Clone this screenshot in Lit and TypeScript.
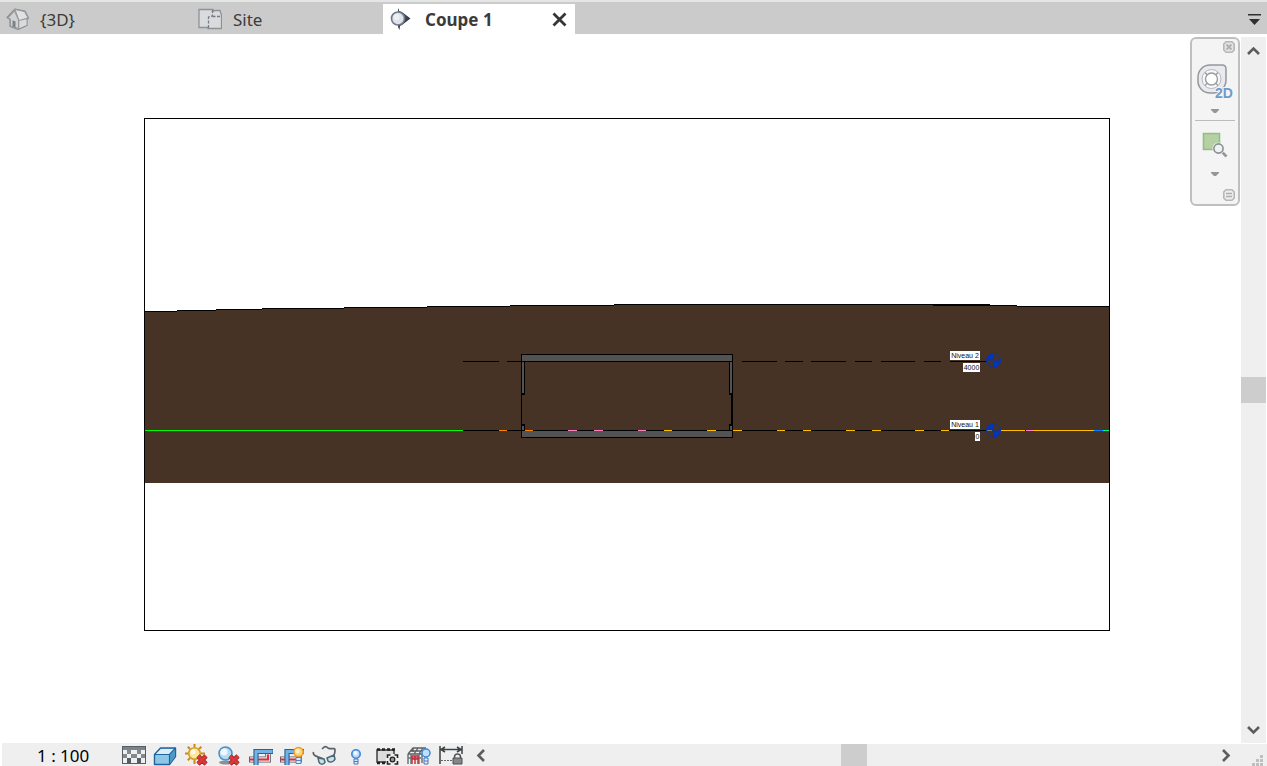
import { LitElement, html, svg, css } from "lit";
import { customElement } from "lit/decorators.js";

type Segment = [start: number, end: number, color?: string];

const GROUND_STEPS: [number, number][] = [
  [145, 311], [177, 310], [216, 309], [262, 308], [344, 307], [427, 306],
  [510, 305], [614, 304], [990, 305], [1017, 306], [1109, 306],
];

const LEVEL_2: Segment[] = [
  [463, 499], [507, 521], [742, 777], [785, 803], [811, 846],
  [855, 872], [881, 915], [924, 941], [950, 987],
];

const LEVEL_1: Segment[] = [
  [145, 463, "#00ff00"], [463, 987], [499, 507, "#ff8000"], [525, 533, "#ff8000"],
  [568, 577, "#ff80c0"], [594, 603, "#ff80c0"], [638, 646, "#ff80c0"],
  [664, 672, "#ffbf00"], [707, 716, "#ffbf00"], [733, 742, "#ffbf00"],
  [777, 785, "#ffbf00"], [803, 811, "#ffbf00"], [846, 855, "#ffbf00"],
  [872, 881, "#ffbf00"], [915, 924, "#ffbf00"], [941, 949, "#ffbf00"],
  [987, 992, "#ffbf00"], [1001, 1025, "#ffbf00"], [1025, 1026], [1026, 1033, "#ff80c0"],
  [1033, 1094, "#ffbf00"], [1094, 1103, "#0080ff"], [1103, 1109, "#00ff80"],
];

const redCross = svg`<path d="M13 12l8 8m0-8l-8 8" stroke="#a32626" stroke-width="4.600"/><path d="M13 12l8 8m0-8l-8 8" stroke="#d8393a" stroke-width="3"/>`;
const pipe = svg`
  <path d="M0 15.500h7M8 15.500h11v-6" fill="none" stroke="#5b5f66" stroke-width="6"/>
  <path d="M1 15.500h18v-6" fill="none" stroke="#e8e8e8" stroke-width="4.400"/>
  <path d="M0 15.500h5M9 15.500h10v-5" fill="none" stroke="#e02b3c" stroke-width="2.200"/>
  <path d="M7 21V7.500H24" fill="none" stroke="#2c5f92" stroke-width="5.200"/>
  <path d="M7 21V7.500H23.500" fill="none" stroke="#72b2e4" stroke-width="3"/>`;

const TOOLS: { label: string; icon: unknown }[] = [
  {
    label: "Niveau de détail",
    icon: svg`<path d="M0 2h24v18H0z" fill="#565d63"/><path d="M1 3h22v3H1z" fill="#7c848a"/>
      <path d="M1 6h22v13H1z" fill="#84898d"/>
      <path d="M1 6h4v4H1zM9 6h6v4H9zM19 6h4v4h-4zM5 10h4v4H5zM15 10h4v4h-4zM1 14h4v5H1zM9 14h6v5H9zM19 14h4v5h-4z" fill="#eef0f1"/>
      <path d="M5 14h4v5H5zM15 14h4v5h-4z" fill="#565d63"/>`,
  },
  {
    label: "Style visuel",
    icon: svg`<path d="M1.500 10.500l6-6.500h15v8.500l-6 8h-15z" fill="#8cc7e8" stroke="#23639a" stroke-width="1.400" stroke-linejoin="round"/>
      <path d="M2.500 10.500l5.500-5.500h14l-5.500 5.500z" fill="#d9eef9"/><path d="M17 11l5-5.500v7l-5 7z" fill="#4c99cc"/>
      <path d="M1.500 10.500h15v10M16.500 10.500l6-6.500" fill="none" stroke="#23639a" stroke-width="1.200"/>`,
  },
  {
    label: "Trajectoire du soleil désactivée",
    icon: svg`<path d="M9.500 0v3M9.500 16v4M0 9.500h3M16 9.500h4M2.800 2.800l2.200 2.200M14 5l2.400-2.300M2.800 16.400L5 14" stroke="#c98a14" stroke-width="2"/>
      <circle cx="9.500" cy="9.500" r="5.800" fill="#ffe59a" stroke="#d59a22" stroke-width="1.500"/>
      <circle cx="8" cy="8" r="2.500" fill="#fffbe6"/>${redCross}`,
  },
  {
    label: "Ombres désactivées",
    icon: svg`<ellipse cx="9" cy="18.500" rx="7" ry="2" fill="#8a9196"/>
      <circle cx="8.500" cy="9.500" r="6.500" fill="#b4dbf4" stroke="#4f8fc2" stroke-width="1.500"/>
      <circle cx="7" cy="8" r="3.500" fill="#eef8fe"/>${redCross}`,
  },
  { label: "Cadrer la vue", icon: pipe },
  {
    label: "Afficher la zone cadrée",
    icon: svg`${pipe}<circle cx="18.500" cy="8" r="4.600" fill="#ffd477" stroke="#f09a22" stroke-width="1.500"/>
      <circle cx="17.500" cy="7" r="2.200" fill="#fff4d0"/><path d="M16 13.500h5v6h-5z" fill="#dcecff" stroke="#5482bd"/><path d="M16 16.500h5" stroke="#5482bd"/>`,
  },
  {
    label: "Masquage/isolation temporaire",
    icon: svg`<path d="M1.500 8c-1 3 2 4 5 5l5 2M10 5c3-3 4-3 6-1 3 2 7-1 7 2 0 2 0 3-1 5" fill="none" stroke="#59636b" stroke-width="1.700"/>
      <path d="M6 14l6 1 1 3c-1 3-5 3-6 0zM15 14l7-3 1 4c-1 3-5 4-7 2z" fill="#c5e4ee" stroke="#4c6570" stroke-width="1.500"/>`,
  },
  {
    label: "Afficher les éléments cachés",
    icon: svg`<circle cx="12" cy="10" r="4.200" fill="#b9dcff" stroke="#3e86db" stroke-width="1.600"/>
      <circle cx="11.500" cy="9" r="2" fill="#f3faff"/><path d="M10 15h4v5h-4z" fill="#e5eefa" stroke="#4779b8"/><path d="M10 17.500h4" stroke="#4779b8"/>`,
  },
  {
    label: "Propriétés de vue temporaires",
    icon: svg`<path d="M2 6h17v12H2z" fill="#dcdddd" stroke="#333" stroke-width="1.400"/>
      <path d="M2 5.500h18M2 19h9" stroke="#222" stroke-width="2.400" stroke-dasharray="3 2"/>
      <path d="M11 10h12v11H11z" fill="#efefef"/><path d="M12.500 14v-3h3M19.500 11h3v3M22.500 17v3h-3M15.500 20h-3v-3" fill="none" stroke="#222" stroke-width="1.600"/>
      <circle cx="17.500" cy="15.500" r="2.300" fill="#999" stroke="#222" stroke-width="1.300"/>`,
  },
  {
    label: "Modèle analytique",
    icon: svg`<path d="M1 10l5-6h13M6 4v4M11 4L7 10M16 4l-4 6M1 10h14M3 7h15M1 10v10M15 10v9" fill="none" stroke="#5b6064" stroke-width="1.300"/>
      <path d="M4 20V10M12 20V10M1 14h13" fill="none" stroke="#6b747b" stroke-width="1.400"/>
      <path d="M5 20v-8h6v8M5 15h6M8 12v8" fill="none" stroke="#c62833" stroke-width="1.400"/>
      <circle cx="19" cy="9" r="4" fill="#bfe0ff" stroke="#3e86db" stroke-width="1.500"/><path d="M17 14h4v6h-4z" fill="#e5eefa" stroke="#4779b8"/><path d="M17 17h4" stroke="#4779b8"/>`,
  },
  {
    label: "Afficher les contraintes",
    icon: svg`<path d="M1 2v18M23 2v8M2 5.500h20M6 3L2 5.500 6 8M18 3l4 2.500L18 8" fill="none" stroke="#3c4145" stroke-width="1.500"/>
      <path d="M2 16.500h11" stroke="#666" stroke-dasharray="2 1"/>
      <path d="M15.500 14v-1a3 3 0 0 1 6 0v1" fill="none" stroke="#555" stroke-width="1.500"/><path d="M14 14h9v6h-9z" fill="#85888a" stroke="#4b4e50"/>`,
  },
];

const segments = (y: number, list: Segment[]) =>
  list.map(([start, end, color]) =>
    svg`<rect x=${start} y=${y} width=${end - start} height="1" fill=${color ?? "#000"}></rect>`);

const levelHead = (y: number) => svg`
  <circle cx="993.5" cy=${y} r="7" fill="none" stroke="#0035b8"></circle>
  <path transform="translate(993.5 ${y})" d="M0 0V-7A7 7 0 0 0 -7 0ZM0 0V7A7 7 0 0 0 7 0Z" fill="#0035b8"></path>`;

const levelTag = (x: number, y: number, width: number, text: string) => svg`
  <rect x=${x} y=${y} width=${width} height="9" fill="#fff"></rect>
  <text x=${x + width / 2} y=${y + 7} text-anchor="middle">${text}</text>`;

@customElement("section-drawing")
export class SectionDrawing extends LitElement {
  static styles = css`
    :host { display: block; min-width: 0; min-height: 0; }
    .sheet { display: block; width: 100%; height: 100%; }
    .sheet text { font: 7px "Liberation Sans", Arial, sans-serif; fill: #111; }
  `;

  render() {
    const outline = GROUND_STEPS.map(([x, y], i) => `${i ? "H" + x : "M" + x + " " + y}V${y}`).join("");
    return html`
      <svg class="sheet" viewBox="144 118 966 513" role="img" aria-label="Coupe 1">
        <g shape-rendering="crispEdges">
          <rect x="144.5" y="118.5" width="965" height="512" fill="#fff" stroke="#000"></rect>
          <path d="${outline}V483H145Z" fill="#473325"></path>
          ${GROUND_STEPS.slice(0, -1).map(([x, y], i) => svg`
            <rect x=${x} y=${y} width=${GROUND_STEPS[i + 1][0] - x} height="1"></rect>`)}
          <rect x="933" y="304" width="57" height="2"></rect>
          ${segments(361, LEVEL_2)}
          <path d="M521.5 354.500h211v7h-211zM521.500 430.500h211v7h-211z" fill="#535353" stroke="#000"></path>
          <path d="M521.500 361.500h3v32h-3zM729.500 361.500h3v32h-3zM521.500 425.500h3v5h-3zM729.500 425.500h3v5h-3z" fill="#535353" stroke="#000"></path>
          <path d="M521 393h4v2h-4zM729 393h4v2h-4zM521 424h4v2h-4zM729 424h4v2h-4zM521 394h1v32h-1zM731 394h2v32h-2z"></path>
          ${segments(430, LEVEL_1)}
        </g>
        ${levelTag(950, 351, 30, "Niveau 2")}
        ${levelTag(963, 363, 17, "4000")}
        ${levelTag(950, 420, 30, "Niveau 1")}
        ${levelTag(975, 432, 5, "0")}
        ${levelHead(360.5)}
        ${levelHead(430.5)}
      </svg>`;
  }
}

@customElement("app-root")
export class AppRoot extends LitElement {
  static styles = css`
    :host {
      display: grid;
      grid-template-rows: 34px minmax(0, 1fr) 23px;
      height: 100vh;
      background: #fff;
      color: #3b3b3b;
      font-family: "Noto Sans", "Open Sans", sans-serif;
      font-size: 17px;
      overflow: hidden;
    }
    * { box-sizing: border-box; }
    svg { display: block; flex: none; }
    button {
      display: flex; align-items: center; justify-content: center;
      margin: 0; padding: 0; border: 0; background: none; color: inherit; font: inherit;
    }
    .tabs { display: flex; align-items: stretch; background: #cbcbcb; border-top: 2px solid #e4e6e5; padding-right: 6px; }
    .tab { display: flex; width: 192px; padding: 2px 0 0 6px; }
    .tab-name { flex: 1; justify-content: flex-start; gap: 11px; }
    .tab.active { margin: 2px 0 0 -1px; padding: 0 7px 0 7px; background: #fff; font-weight: 700; }
    .tab.active .tab-name { gap: 12px; }
    .close { width: 17px; }
    .tab-list { margin-left: auto; padding-top: 2px; }
    .workspace { display: grid; grid-template-columns: minmax(0, 1fr) 25px; padding-right: 1px; min-height: 0; }
    .canvas { position: relative; display: grid; padding: 84px 131px 112px 144px; min-height: 0; }
    .nav {
      position: absolute; top: 3px; right: 1px; width: 50px; padding: 0 3px 2px;
      display: flex; flex-direction: column; align-items: stretch;
      border: 2px solid #bfbfbf; border-radius: 6px; background: #f4f4f4;
    }
    .nav-end { align-self: flex-end; height: 15px; }
    .nav-tool { height: 48px; padding-top: 8px; }
    .nav-more { height: 18px; }
    .nav-zoom { height: 45px; border-top: 1px solid #bcbcbc; padding-top: 4px; }
    .nav-zoom + .nav-more { margin-bottom: 4px; }
    .v-scroll { display: flex; flex-direction: column; align-items: stretch; background: #efefef; margin-top: 3px; }
    .v-scroll button { height: 26px; }
    .track { flex: 1; display: flex; min-width: 0; min-height: 0; }
    .v-scroll .track { flex-direction: column; }
    .before-v { flex: 314 1 0; }
    .after-v { flex: 315 1 0; }
    .thumb { background: #cdcdcd; flex: 0 0 26px; }
    .status { display: flex; align-items: stretch; padding-left: 2px; min-width: 0; }
    .view-bar {
      display: flex; align-items: center; justify-content: space-between;
      width: 465px; flex: none; background: #efefef; padding: 0 4px 0 35px;
    }
    .scale { width: 77px; justify-content: flex-start; color: #000; line-height: 20px; padding-top: 2px; }
    .h-scroll { display: flex; flex: 1; min-width: 0; margin-top: 1px; background: #efefef; }
    .h-scroll button { width: 26px; }
    .before-h { flex: 347 1 0; }
    .after-h { flex: 346 1 0; }
    .corner { display: flex; align-items: flex-end; justify-content: flex-end; width: 28px; margin-top: 1px; padding-right: 4px; background: #efefef; }
  `;

  private arrow(d: string, width: number, height: number) {
    return html`<svg width=${width} height=${height} viewBox="0 0 ${width} ${height}" aria-hidden="true">
      <path d=${d} fill="none" stroke="#5c5c5c" stroke-width="2.6"></path></svg>`;
  }

  private more(label: string) {
    return html`<button class="nav-more" aria-label=${label}>
      <svg width="8" height="4" viewBox="0 0 8 4"><path d="M0 0h8v1L5 4H3L0 1z" fill="#969696"/></svg></button>`;
  }

  render() {
    return html`
      <nav class="tabs" aria-label="Vues">
        <div class="tab">
          <button class="tab-name">
            <svg width="23" height="23" viewBox="0 0 23 23">
              <path d="M1 9.500L9 1l10 2 3.500 7-1.500 1.500v6L12 21.500l-8-3v-7z" fill="#b5b7b9" stroke="#8c8f91" stroke-width="1.200" stroke-linejoin="round"/>
              <path d="M9 1.500l9.500 2 3.500 6.500-9 2.500z" fill="#e0e1e2" stroke="#96999b"/>
              <path d="M2 10l6.500-7 4 9v8.500L4.500 18v-7z" fill="#d0d2d3" stroke="#96999b"/>
              <path d="M13.500 13l7-1.500v5.500l-7 3z" fill="#d9dbdc"/><path d="M6.500 18.500v-6l3 .7v6.300z" fill="#7e8183"/>
            </svg>
            <span>{3D}</span>
          </button>
        </div>
        <div class="tab">
          <button class="tab-name">
            <svg width="24" height="22" viewBox="0 0 24 22">
              <path d="M1 1.500h14v2l2-1h5l1.500 5v13H10v-1H1z" fill="#d9dbde" stroke="#8f9295" stroke-width="1.300"/>
              <path d="M14.500 2v6l-4 1v11M14.500 8.500H23" fill="none" stroke="#777b80" stroke-width="1.300" stroke-dasharray="3 1.500"/>
            </svg>
            <span>Site</span>
          </button>
        </div>
        <div class="tab active">
          <button class="tab-name" aria-current="page">
            <svg width="23" height="22" viewBox="0 0 23 22">
              <path d="M9 0v3l3 1 8.500 6.500L12 17l-2 1-.5 4-1.500-3V2z" fill="#394150"/>
              <circle cx="8" cy="10.500" r="6.500" fill="#dfe3ec" stroke="#747b88" stroke-width="1.700"/>
              <circle cx="6.500" cy="9" r="3" fill="#eef0f6"/>
            </svg>
            <span>Coupe 1</span>
          </button>
          <button class="close" aria-label="Fermer Coupe 1">
            <svg width="15" height="15" viewBox="0 0 15 15"><path d="M1.500 1.500l12 12m0-12l-12 12" stroke="#353535" stroke-width="2.800"/></svg>
          </button>
        </div>
        <button class="tab-list" aria-label="Liste des vues">
          <svg width="13" height="11" viewBox="0 0 13 11"><path d="M0 0h13v1.500H0zM1 5h11l-5.500 6z" fill="#303030"/></svg>
        </button>
      </nav>

      <main class="workspace">
        <section class="canvas">
          <section-drawing></section-drawing>
          <aside class="nav" aria-label="Navigation">
            <button class="nav-end" aria-label="Fermer">
              <svg width="12" height="12" viewBox="0 0 12 12"><path d="M3 .8h6L11.200 3v6L9 11.200H3L.8 9V3z" fill="#e3e3e3" stroke="#b7b7b7" stroke-width="1.600"/><path d="M3.500 3.500l5 5m0-5l-5 5" stroke="#b0b0b0" stroke-width="1.800"/></svg>
            </button>
            <button class="nav-tool" aria-label="Disque de navigation 2D">
              <svg width="36" height="36" viewBox="0 0 36 36">
                <path d="M13 1h12q4 0 4 4v11a13 13 0 0 1-13 13h-3a12 12 0 0 1-12-12v-4A12 12 0 0 1 13 1z" fill="#e9eaed" stroke="#94979f" stroke-width="1.500"/>
                <circle cx="14.500" cy="15" r="9.500" fill="#f8f8f9" stroke="#b4b6bc"/>
                <circle cx="14.500" cy="15" r="6" fill="#fff" stroke="#9a9ca3" stroke-width="1.400"/>
                <path d="M8 8.500l2.500 2.500M21 8.500L18.500 11M8 21.500l2.500-2.500M21 21.500L18.500 19" stroke="#9b9da3" stroke-width="1.400"/>
                <text x="18" y="34" font-family="Liberation Sans, sans-serif" font-weight="700" font-size="14" fill="#6e9bc8" stroke="#f4f4f4" stroke-width="2" paint-order="stroke">2D</text>
              </svg>
            </button>
            ${this.more("Options du disque")}
            <button class="nav-zoom" aria-label="Zoom sur une région">
              <svg width="26" height="26" viewBox="0 0 26 26">
                <path d="M1.500 1.500h16v16h-16z" fill="#b5d1a4" stroke="#93bd89" stroke-width="1.600"/>
                <path d="M20 20l4.500 4.500" stroke="#f4f4f4" stroke-width="5"/><path d="M20 20l4.500 4.500" stroke="#979797" stroke-width="2.600"/>
                <circle cx="16.500" cy="16.500" r="6" fill="#f4f4f4"/><circle cx="16.500" cy="16.500" r="4.600" fill="#edf3f5" stroke="#8b8f90" stroke-width="1.600"/>
              </svg>
            </button>
            ${this.more("Options de zoom")}
            <button class="nav-end" aria-label="Personnaliser">
              <svg width="12" height="12" viewBox="0 0 12 12"><path d="M3 .8h6L11.200 3v6L9 11.200H3L.8 9V3z" fill="#ededed" stroke="#b7b7b7" stroke-width="1.600"/><path d="M3 4.500h6M3 7.500h6" stroke="#b0b0b0" stroke-width="1.400"/></svg>
            </button>
          </aside>
        </section>
        <div class="v-scroll">
          <button aria-label="Défiler vers le haut">${this.arrow("M1 8l5.5-5.5L12 8", 13, 9)}</button>
          <div class="track"><div class="before-v"></div><div class="thumb"></div><div class="after-v"></div></div>
          <button aria-label="Défiler vers le bas">${this.arrow("M1 1l5.500 5.500L12 1", 13, 9)}</button>
        </div>
      </main>

      <footer class="status">
        <div class="view-bar">
          <button class="scale" aria-label="Echelle de la vue">1 : 100</button>
          ${TOOLS.map((tool) => html`
            <button aria-label=${tool.label}>
              <svg width="24" height="22" viewBox="0 0 24 22" fill="none">${tool.icon}</svg>
            </button>`)}
        </div>
        <div class="h-scroll">
          <button aria-label="Défiler vers la gauche">${this.arrow("M8 1L2.500 6.500 8 12", 9, 13)}</button>
          <div class="track"><div class="before-h"></div><div class="thumb"></div><div class="after-h"></div></div>
          <button aria-label="Défiler vers la droite">${this.arrow("M1 1l5.500 5.500L1 12", 9, 13)}</button>
        </div>
        <div class="corner">
          <svg width="11" height="11" viewBox="0 0 11 11" shape-rendering="crispEdges"><path d="M8 0h3v3H8zM8 4h3v3H8zM4 4h3v3H4zM0 8h3v3H0zM4 8h3v3H4zM8 8h3v3H8z" fill="#bfbfbf"/></svg>
        </div>
      </footer>`;
  }
}
